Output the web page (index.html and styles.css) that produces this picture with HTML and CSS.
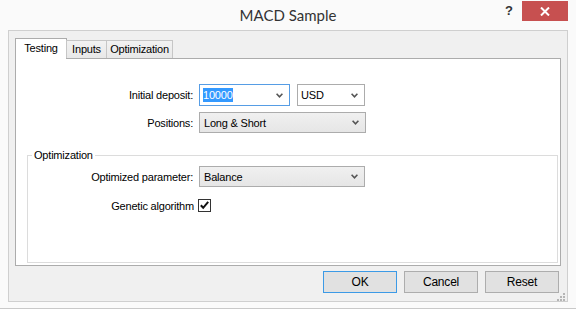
FILE: index.html
```html
<!DOCTYPE html>
<html lang="en">
<head>
    <meta charset="UTF-8">
    <title>MACD Sample</title>
    <link rel="stylesheet" href="styles.css">
</head>
<body>
    <div class="window">
        <div class="titlebar">
            <div></div>
            <div class="title">MACD Sample</div>
            <div class="controls">
                <span class="help">?</span>
                <span class="close">
                    <svg width="10" height="9" viewBox="0 0 10 9"><path d="M1 0.5 L9 8.5 M9 0.5 L1 8.5" stroke="#fff" stroke-width="2"/></svg>
                </span>
            </div>
        </div>

        <div class="client">
            <div class="tabs">
                <div class="tab active">Testing</div>
                <div class="tab">Inputs</div>
                <div class="tab">Optimization</div>
            </div>

            <div class="panel">
                <div class="row first">
                    <label class="label">Initial deposit:</label>
                    <div class="combo edit focused w-deposit">
                        <span class="selected">10000</span>
                        <svg class="chevron" width="7" height="5" viewBox="0 0 7 5"><path d="M0.6 0.8 L3.5 3.8 L6.4 0.8" fill="none" stroke="#555" stroke-width="1.6"/></svg>
                    </div>
                    <div class="combo edit w-currency">
                        <span>USD</span>
                        <svg class="chevron" width="7" height="5" viewBox="0 0 7 5"><path d="M0.6 0.8 L3.5 3.8 L6.4 0.8" fill="none" stroke="#555" stroke-width="1.6"/></svg>
                    </div>
                </div>
                <div class="row">
                    <label class="label">Positions:</label>
                    <div class="combo list w-wide">
                        <span>Long &amp; Short</span>
                        <svg class="chevron" width="7" height="5" viewBox="0 0 7 5"><path d="M0.6 0.8 L3.5 3.8 L6.4 0.8" fill="none" stroke="#555" stroke-width="1.6"/></svg>
                    </div>
                </div>

                <fieldset class="group">
                    <legend>Optimization</legend>
                    <div class="row">
                        <label class="label group-label">Optimized parameter:</label>
                        <div class="combo list w-param">
                            <span>Balance</span>
                            <svg class="chevron" width="7" height="5" viewBox="0 0 7 5"><path d="M0.6 0.8 L3.5 3.8 L6.4 0.8" fill="none" stroke="#555" stroke-width="1.6"/></svg>
                        </div>
                    </div>
                    <div class="row check-row">
                        <label class="label check-label">Genetic algorithm</label>
                        <span class="checkbox">
                            <svg width="11" height="11" viewBox="0 0 11 11"><path d="M1.8 5.2 L4.2 7.8 L9.2 1.8" fill="none" stroke="#111" stroke-width="2"/></svg>
                        </span>
                    </div>
                </fieldset>
            </div>

            <div class="buttons">
                <button class="btn default">OK</button>
                <button class="btn">Cancel</button>
                <button class="btn">Reset</button>
            </div>
            <div class="grip">
                <svg width="8" height="8" viewBox="0 0 8 8" fill="#b5b5b5">
                    <rect x="6" y="0" width="2" height="2"/>
                    <rect x="3" y="3" width="2" height="2"/>
                    <rect x="6" y="3" width="2" height="2"/>
                    <rect x="0" y="6" width="2" height="2"/>
                    <rect x="3" y="6" width="2" height="2"/>
                    <rect x="6" y="6" width="2" height="2"/>
                </svg>
            </div>
        </div>
    </div>
</body>
</html>
```

FILE: styles.css
```css
* {
    margin: 0;
    padding: 0;
    box-sizing: border-box;
}

body {
    width: 576px;
    height: 314px;
    background: #ffffff;
    font-family: 'Liberation Sans', Arial, sans-serif;
    font-size: 11px;
    letter-spacing: -0.2px;
    color: #000;
    overflow: hidden;
}

.window {
    height: 309px;
    background: #fafafa;
    border-bottom: 1px solid #c9c9c9;
}

/* Title bar */
.titlebar {
    height: 30px;
    display: grid;
    grid-template-columns: 1fr auto 1fr;
    align-items: start;
}

.title {
    font-family: Lato, 'Liberation Sans', sans-serif;
    font-size: 15px;
    letter-spacing: 0;
    color: #333;
    line-height: 30px;
}

.controls {
    display: flex;
    justify-content: flex-end;
    margin-right: 8px;
    margin-top: 1px;
}

.help {
    width: 26px;
    height: 20px;
    line-height: 20px;
    text-align: center;
    font-weight: bold;
    font-size: 13px;
    letter-spacing: 0;
    color: #333;
}

.close {
    width: 46px;
    height: 20px;
    background: #c75050;
    display: flex;
    align-items: center;
    justify-content: center;
}

/* Client area */
.client {
    position: relative;
    margin: 0 8px 0 8px;
    height: 272px;
    background: #f0f0f0;
    border: 1px solid #cfcfcf;
    padding: 7px 6px 0 6px;
}

.tabs {
    display: flex;
    align-items: flex-end;
    height: 20px;
    position: relative;
    z-index: 1;
}

.tab {
    height: 18px;
    line-height: 16px;
    padding: 0 3px;
    border: 1px solid #c6c6c6;
    border-bottom: none;
    background: linear-gradient(#f2f2f2, #e8e8e8);
    margin-left: -1px;
    text-align: center;
}

.tab.active {
    height: 21px;
    margin-left: 0;
    margin-bottom: -1px;
    width: 52px;
    line-height: 18px;
    background: #fff;
    border-color: #acacac;
}

.tab:nth-child(2) { width: 41px; }
.tab:nth-child(3) { width: 67px; }

.panel {
    height: 208px;
    background: #fff;
    border: 1px solid #acacac;
    display: flex;
    flex-direction: column;
}

.row {
    display: flex;
    align-items: center;
    margin-top: 6px;
}

.row.first {
    margin-top: 25px;
}

.label {
    width: 177px;
    margin-right: 6px;
    text-align: right;
}

.combo {
    height: 21px;
    border: 1px solid #acacac;
    display: flex;
    align-items: center;
    justify-content: space-between;
    padding: 0 6px 0 3px;
    font-size: 11px;
}

.combo.list {
    background: linear-gradient(#f0f0f0, #e6e6e6);
    padding-left: 4px;
}

.combo.edit {
    background: #fff;
    height: 22px;
    margin-right: 7px;
}

.combo.focused {
    border-color: #569de5;
}

.selected {
    background: #3399ff;
    color: #fff;
    line-height: 14px;
}

.chevron {
    flex-shrink: 0;
}

.w-deposit { width: 91px; }
.w-currency { width: 68px; }
.w-wide { width: 167px; }
.w-param { width: 166px; }

/* Group box */
.group {
    flex: 1;
    margin: 16px 2px 2px 11px;
    border: 1px solid #dcdcdc;
    padding: 4px 0 0 0;
}

.group legend {
    margin-left: 4px;
    padding: 0 2px;
    line-height: 13px;
}

.group .row {
    margin-top: 0;
}

.group-label {
    width: 165px;
}

.check-row {
    margin-top: 12px !important;
}

.check-label {
    width: 166px;
    margin-right: 4px;
}

.checkbox {
    width: 13px;
    height: 13px;
    border: 1px solid #333;
    background: #fff;
    display: flex;
    align-items: center;
    justify-content: center;
}

/* Buttons */
.buttons {
    display: flex;
    justify-content: flex-end;
    gap: 7px;
    margin-top: 5px;
    padding-right: 2px;
}

.btn {
    width: 74px;
    height: 22px;
    background: #e1e1e1;
    border: 1px solid #adadad;
    font-family: 'Liberation Sans', Arial, sans-serif;
    font-size: 12px;
    letter-spacing: -0.2px;
    color: #000;
}

.btn.default {
    border-color: #3c9ae6;
}

.grip {
    position: absolute;
    right: 2px;
    bottom: 2px;
    width: 8px;
    height: 8px;
}
```
